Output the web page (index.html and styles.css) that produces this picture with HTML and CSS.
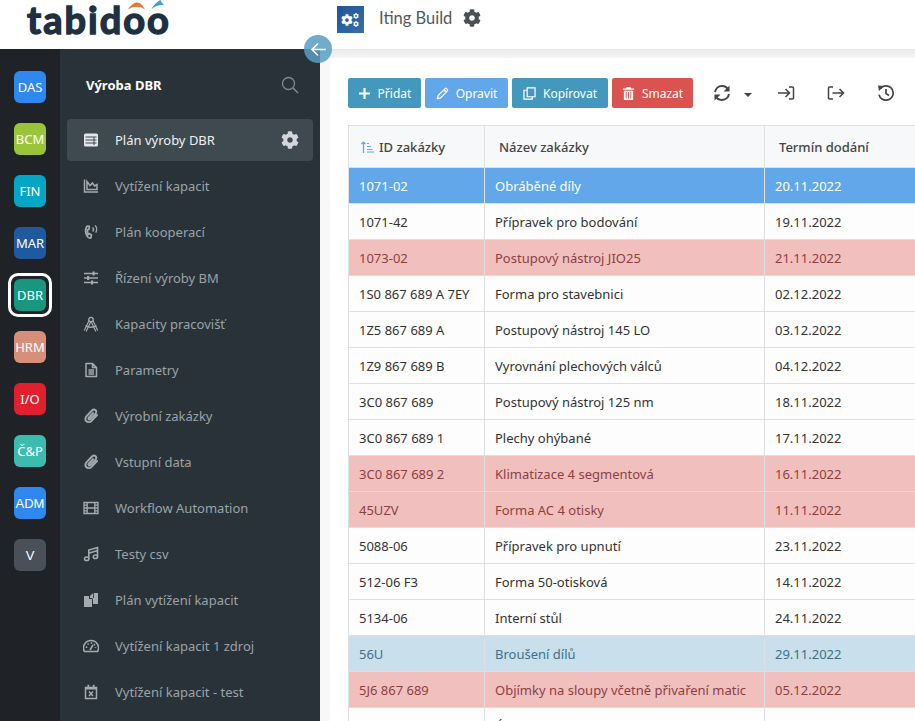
FILE: index.html
```html
<!DOCTYPE html>
<html lang="cs">
<head>
  <meta charset="UTF-8" />
  <meta name="viewport" content="width=device-width, initial-scale=1.0"/>
  <title>tabidoo - Výroba DBR</title>
  <link rel="stylesheet" href="styles.css">
</head>
<body>
  <svg class="defs" aria-hidden="true">
    <symbol id="cog" viewBox="0 0 512 512">
      <path fill="currentColor" d="M487.4 315.7l-42.6-24.6c4.3-23.2 4.3-47 0-70.2l42.6-24.6c4.9-2.8 7.1-8.6 5.5-14-11.1-35.6-30-67.8-54.7-94.6-3.8-4.1-10-5.1-14.8-2.3L380.8 110c-17.9-15.4-38.5-27.3-60.8-35.1V25.8c0-5.6-3.9-10.5-9.4-11.7-36.7-8.2-74.3-7.8-109.2 0-5.5 1.2-9.4 6.1-9.4 11.7V75c-22.2 7.9-42.8 19.8-60.8 35.1L88.7 85.5c-4.9-2.8-11-1.9-14.8 2.3-24.7 26.7-43.6 58.9-54.7 94.6-1.7 5.4.6 11.2 5.5 14L67.3 221c-4.3 23.2-4.3 47 0 70.2l-42.6 24.6c-4.9 2.8-7.1 8.6-5.5 14 11.1 35.6 30 67.8 54.7 94.6 3.8 4.1 10 5.1 14.8 2.3l42.6-24.6c17.9 15.4 38.5 27.3 60.8 35.1v49.2c0 5.6 3.9 10.5 9.4 11.7 36.7 8.2 74.3 7.8 109.2 0 5.5-1.2 9.4-6.1 9.4-11.7v-49.2c22.2-7.9 42.8-19.8 60.8-35.1l42.6 24.6c4.9 2.8 11 1.9 14.8-2.3 24.7-26.7 43.6-58.9 54.7-94.6 1.5-5.5-.7-11.3-5.6-14.1zM256 336c-44.1 0-80-35.9-80-80s35.9-80 80-80 80 35.9 80 80-35.9 80-80 80z"/>
    </symbol>
    <symbol id="clip" viewBox="0 0 16 16">
      <path fill="none" stroke="currentColor" stroke-width="1.900" stroke-linecap="round" d="M14 7l-5.400 5.800c-1.500 1.600-3.800 1.800-5.200.5-1.400-1.300-1.300-3.500.2-5.100l5.400-5.700c1.100-1.100 2.600-1.200 3.600-.3 1 .9.900 2.500-.2 3.600l-5 5.200c-.5.500-1.200.6-1.700.2-.4-.4-.3-1.200.2-1.700l4.200-4.400"/>
    </symbol>
  </svg>

  <header class="topbar">
    <div class="logo">
      <span class="logo-text">tabidoo</span>
      <svg class="logo-orange" viewBox="0 0 24 10"><path fill="#e8762c" d="M0 10C4 3 9 0 13 0c4 0 8 4 11 10-4-3-7-4-11-4-5 0-9 1-13 4z"/></svg>
      <svg class="logo-blue" viewBox="0 0 20 14"><path fill="#3f9fd0" d="M0 14C3 8 9 2 14 0c1 3 3 6 6 8-7-1-14 1-20 6z"/></svg>
    </div>
    <div class="app-tile">
      <svg width="19" height="16" viewBox="0 0 19 16">
        <use href="#cog" x="0" y="2" width="12" height="12" color="#fff"/>
        <use href="#cog" x="12" y="1" width="6" height="6" color="#fff"/>
        <use href="#cog" x="12" y="9" width="6" height="6" color="#fff"/>
      </svg>
    </div>
    <span class="app-name">Iting Build</span>
    <svg class="app-cog"><use href="#cog"/></svg>
  </header>

  <div class="layout">
    <button class="collapse" aria-label="Sbalit">
      <svg width="17" height="15" viewBox="0 0 18 16"><path fill="none" stroke="#fff" stroke-width="1.600" d="M17 8H2M8.500 1.500L2 8l6.500 6.500"/></svg>
    </button>

    <nav class="rail">
      <a class="tile das">DAS</a>
      <a class="tile bcm">BCM</a>
      <a class="tile fin">FIN</a>
      <a class="tile mar">MAR</a>
      <a class="tile dbr current">DBR</a>
      <a class="tile hrm">HRM</a>
      <a class="tile io">I/O</a>
      <a class="tile cp">Č&amp;P</a>
      <a class="tile adm arial">ADM</a>
      <a class="tile v arial">V</a>
    </nav>

    <aside class="sidebar">
      <div class="side-head">
        <strong>Výroba DBR</strong>
        <svg width="18" height="18" viewBox="0 0 18 18"><circle cx="7.500" cy="7.500" r="6" fill="none" stroke="#7f888d" stroke-width="1.300"/><path stroke="#7f888d" stroke-width="1.600" d="M12 12l5 5"/></svg>
      </div>
      <ul class="menu">
        <li class="active">
          <svg class="mi" viewBox="0 0 16 16"><rect x="1" y="1.500" width="14" height="13" rx="1.500" fill="currentColor"/><path fill="none" stroke="#3e4a50" stroke-width="1" d="M2.500 5h11M2.500 8h11M2.500 11h11M11 5v8"/></svg>
          <span>Plán výroby DBR</span>
          <svg class="item-cog"><use href="#cog"/></svg>
        </li>
        <li>
          <svg class="mi" viewBox="0 0 16 16"><path fill="none" stroke="currentColor" stroke-width="1.500" d="M1.500 1.500v12.500H15M4 11.500V3.500l3 4 2.500-2.500 2 3 2.500-1.500v5z"/></svg>
          <span>Vytížení kapacit</span>
        </li>
        <li>
          <svg class="mi" viewBox="0 0 16 16"><path fill="none" stroke="currentColor" stroke-width="1.700" stroke-linejoin="round" d="M4.500 2c-2 1.500-2.700 5.200-1.200 8.500 1 2.400 2.700 3.800 4.500 3.500l.7-3-2.300-1.400-1 .9c-.8-1.500-1-3.200-.6-4.800l1.300-.3.400-3z"/><path fill="none" stroke="currentColor" stroke-width="1.400" d="M9.500 3.500c1 .8 1.200 2.500.3 4M12 1.500c1.800 1.500 2.200 4.600.7 7.200"/></svg>
          <span>Plán kooperací</span>
        </li>
        <li>
          <svg class="mi" viewBox="0 0 16 16"><path fill="none" stroke="currentColor" stroke-width="1.400" d="M1 3.500h14M1 8h14M1 12.500h14"/><path fill="currentColor" d="M9.500 1.500h2.200v4H9.500zM4 6h2.200v4H4zM8 10.500h2.200v4H8z"/></svg>
          <span>Řízení výroby BM</span>
        </li>
        <li>
          <svg class="mi" viewBox="0 0 16 16"><path fill="none" stroke="currentColor" stroke-width="3.200" d="M8 3L2.200 15M8 3l5.800 12"/><path fill="none" stroke="#293238" stroke-width="1" d="M8 3L2.200 15M8 3l5.800 12"/><path fill="none" stroke="currentColor" stroke-width="1.500" d="M2.500 9.500c3 2.300 8 2.300 11 0"/><circle cx="8" cy="3.500" r="2.200" fill="#293238" stroke="currentColor" stroke-width="1.300"/></svg>
          <span>Kapacity pracovišť</span>
        </li>
        <li>
          <svg class="mi" viewBox="0 0 16 16"><path fill="none" stroke="currentColor" stroke-width="1.500" stroke-linejoin="round" d="M3 1.500h6.500L13.500 5.500v9H3zM9.500 1.500v4h4M5.500 8h5.500M5.500 10h5.500M5.500 12h5.500"/></svg>
          <span>Parametry</span>
        </li>
        <li><svg class="mi"><use href="#clip"/></svg><span>Výrobní zakázky</span></li>
        <li><svg class="mi"><use href="#clip"/></svg><span>Vstupní data</span></li>
        <li>
          <svg class="mi" viewBox="0 0 16 16"><path fill="none" stroke="currentColor" stroke-width="1.300" d="M1 2.500h14v11H1zM4.200 2.500v11M11.800 2.500v11M1 5.200h3.200M1 8h3.200M1 10.800h3.200M11.800 5.200H15M11.800 8H15M11.800 10.800H15M4.200 8h7.600"/></svg>
          <span>Workflow Automation</span>
        </li>
        <li>
          <svg class="mi" viewBox="0 0 16 16"><path fill="none" stroke="currentColor" stroke-width="1.600" d="M5.800 12.500V4L14.500 1.500v9M5.800 7.200l8.700-2.700"/><ellipse cx="3.700" cy="12.800" rx="2.200" ry="1.800" fill="none" stroke="currentColor" stroke-width="1.500"/><ellipse cx="12.400" cy="10.800" rx="2.200" ry="1.800" fill="none" stroke="currentColor" stroke-width="1.500"/></svg>
          <span>Testy csv</span>
        </li>
        <li>
          <svg class="mi" viewBox="0 0 16 16"><path fill="currentColor" d="M1 4h5v3h3v8H1zM9.500 1.500L7 4v2h3V1.500zM10.800 1H15v11h-5V8l-.5-2h1.300z"/></svg>
          <span>Plán vytížení kapacit</span>
        </li>
        <li>
          <svg class="mi" viewBox="0 0 16 16"><path fill="none" stroke="currentColor" stroke-width="1.600" stroke-linejoin="round" d="M1.400 13.500a7.500 7.500 0 1 1 13.200 0z"/><path stroke="currentColor" stroke-width="1.600" d="M7 12l3-5"/><path fill="none" stroke="currentColor" stroke-width="1.500" stroke-dasharray="1.500 2" d="M3.500 10c0-3 2-5 4.500-5s4.500 2 4.500 5"/></svg>
          <span>Vytížení kapacit 1 zdroj</span>
        </li>
        <li>
          <svg class="mi" viewBox="0 0 16 16"><path fill="none" stroke="currentColor" stroke-width="1.500" d="M2.500 3.500h11v11h-11zM6 7.500L10 12M10 7.500L6 12"/><path fill="currentColor" d="M2.500 3h11v2.500h-11zM4.500 .8h1.700V3H4.500zM9.800 .8h1.700V3H9.800z"/></svg>
          <span>Vytížení kapacit - test</span>
        </li>
      </ul>
    </aside>

    <main class="content">
      <div class="panel">
        <div class="toolbar">
          <button class="btn teal"><svg viewBox="0 0 12 12"><path stroke="#fff" stroke-width="2" d="M6 1v10M1 6h10"/></svg>Přidat</button>
          <button class="btn blue"><svg viewBox="0 0 14 14"><path fill="none" stroke="#fff" stroke-width="1.300" d="M1.500 12.500l.8-3.300L9.800 1.700a1 1 0 0 1 1.400 0l1.100 1.100a1 1 0 0 1 0 1.400l-7.500 7.500zM8.500 3l2.500 2.500"/></svg>Opravit</button>
          <button class="btn teal"><svg viewBox="0 0 14 14"><path fill="none" stroke="#fff" stroke-width="1.300" d="M4.500 1h8.500v9.500H4.500zM4.500 3.500h-3.500v9.500h9v-2.500"/></svg>Kopírovat</button>
          <button class="btn red"><svg viewBox="0 0 14 14"><path fill="#fff" d="M5 0h4l1 1.500h3v1.500H1V1.500h3zM2 4h10v10H2zm2 1.500v7h1v-7zm2.500 0v7h1v-7zm2.500 0v7h1v-7z"/></svg>Smazat</button>

          <svg class="tool sync" viewBox="0 0 18 18"><path fill="none" stroke="#444" stroke-width="2" d="M15.500 6.500C14.500 3.500 12 2 9 2 5 2 2.500 5 2 8M2.500 11.500C3.500 14.500 6 16 9 16c4 0 6.500-3 7-6"/><path fill="#444" d="M16.500 1.500v6h-6zM1.500 16.500v-6h6z"/></svg>
          <span class="caret"></span>
          <svg class="tool login" viewBox="0 0 18 18"><path fill="none" stroke="#444" stroke-width="1.500" d="M1 9h11M8.500 5l4 4-4 4M12 3h3.500a1 1 0 0 1 1 1v10a1 1 0 0 1-1 1H12"/></svg>
          <svg class="tool logout" viewBox="0 0 18 18"><path fill="none" stroke="#444" stroke-width="1.500" d="M6 3H2.500a1 1 0 0 0-1 1v10a1 1 0 0 0 1 1H6M5.500 9h11M12.500 5l4 4-4 4"/></svg>
          <svg class="tool history" viewBox="0 0 18 18"><path fill="none" stroke="#444" stroke-width="1.700" d="M3.500 4.500C5 2.500 7 1.800 9 1.800a7.200 7.200 0 1 1-7 8.800M9 5v4.500l3 2"/><path fill="#444" d="M1 1.500l6 .5-5 5z"/></svg>
        </div>

        <div class="table-wrap">
          <table class="grid">
            <colgroup><col class="c1"><col class="c2"><col class="c3"></colgroup>
            <thead>
              <tr>
                <th class="id-head"><svg class="sort" viewBox="0 0 13 12"><path fill="none" stroke="#62a7e9" stroke-width="1.200" d="M2.500 12V1M.5 3l2-2 2 2M6 2.500h2M6 5.500h4M6 8.500h5.500M6 11h7"/></svg>ID zakázky</th>
                <th>Název zakázky</th>
                <th>Termín dodání</th>
              </tr>
            </thead>
            <tbody>
              <tr class="selected"><td>1071-02</td><td>Obráběné díly</td><td>20.11.2022</td></tr>
              <tr><td>1071-42</td><td>Přípravek pro bodování</td><td>19.11.2022</td></tr>
              <tr class="late"><td>1073-02</td><td>Postupový nástroj JIO25</td><td>21.11.2022</td></tr>
              <tr><td>1S0 867 689 A 7EY</td><td>Forma pro stavebnici</td><td>02.12.2022</td></tr>
              <tr><td>1Z5 867 689 A</td><td>Postupový nástroj 145 LO</td><td>03.12.2022</td></tr>
              <tr><td>1Z9 867 689 B</td><td>Vyrovnání plechových válců</td><td>04.12.2022</td></tr>
              <tr><td>3C0 867 689</td><td>Postupový nástroj 125 nm</td><td>18.11.2022</td></tr>
              <tr><td>3C0 867 689 1</td><td>Plechy ohýbané</td><td>17.11.2022</td></tr>
              <tr class="late"><td>3C0 867 689 2</td><td>Klimatizace 4 segmentová</td><td>16.11.2022</td></tr>
              <tr class="late"><td>45UZV</td><td>Forma AC 4 otisky</td><td>11.11.2022</td></tr>
              <tr><td>5088-06</td><td>Přípravek pro upnutí</td><td>23.11.2022</td></tr>
              <tr><td>512-06 F3</td><td>Forma 50-otisková</td><td>14.11.2022</td></tr>
              <tr><td>5134-06</td><td>Interní stůl</td><td>24.11.2022</td></tr>
              <tr class="info"><td>56U</td><td>Broušení dílů</td><td>29.11.2022</td></tr>
              <tr class="late"><td>5J6 867 689</td><td>Objímky na sloupy včetně přivaření matic</td><td>05.12.2022</td></tr>
              <tr><td></td><td>Úhelník</td><td></td></tr>
            </tbody>
          </table>
        </div>
      </div>
    </main>
  </div>
</body>
</html>
```

FILE: styles.css
```css
* {
  box-sizing: border-box;
}

html, body {
  height: 100%;
}

body {
  margin: 0;
  height: 721px;
  overflow: hidden;
  display: flex;
  flex-direction: column;
  font-family: 'Noto Sans', sans-serif;
  font-size: 13px;
  color: #333;
  background: #fff;
}

.defs {
  display: none;
}

/* top bar */
.topbar {
  height: 49px;
  flex-shrink: 0;
  display: flex;
  align-items: flex-start;
  background: #fff;
}

.logo {
  position: relative;
  width: 337px;
  height: 49px;
  padding: 0 0 0 27px;
  flex-shrink: 0;
}

.logo-text {
  display: block;
  font-family: 'Lato', sans-serif;
  font-weight: 700;
  font-size: 38px;
  line-height: 38px;
  letter-spacing: 2px;
  color: #1f3040;
  -webkit-text-stroke: 1.4px #1f3040;
}

.logo-orange {
  position: absolute;
  left: 128px;
  top: 2px;
  width: 17px;
  height: 8px;
}

.logo-blue {
  position: absolute;
  left: 148px;
  top: 0;
  width: 20px;
  height: 9px;
}

.app-tile {
  width: 27px;
  height: 27px;
  margin-top: 6px;
  display: flex;
  align-items: center;
  justify-content: center;
  background: linear-gradient(135deg, #1f5599, #3a6ea8);
}

.app-name {
  margin: 7px 0 0 15px;
  font-family: 'Lato', sans-serif;
  font-size: 16.5px;
  line-height: 22px;
  color: #54595e;
}

.app-cog {
  width: 18px;
  height: 18px;
  margin: 9px 0 0 11px;
  color: #4a4f54;
}

/* page columns */
.layout {
  position: relative;
  flex: 1;
  min-height: 0;
  display: flex;
}

.collapse {
  position: absolute;
  left: 304px;
  top: -14px;
  z-index: 3;
  width: 28px;
  height: 28px;
  padding: 0;
  border: none;
  border-radius: 50%;
  display: flex;
  align-items: center;
  justify-content: center;
  background: rgba(88, 158, 194, 0.85);
}

.rail {
  width: 60px;
  flex-shrink: 0;
  padding-top: 22px;
  display: flex;
  flex-direction: column;
  align-items: center;
  gap: 20px;
  background: #1f2226;
}

.tile {
  position: relative;
  width: 32px;
  height: 32px;
  border-radius: 6px;
  display: flex;
  align-items: center;
  justify-content: center;
  color: #fff;
  font-size: 13px;
}

.tile.arial {
  font-family: 'Liberation Sans', sans-serif;
}

.tile.current::after {
  content: "";
  position: absolute;
  inset: -6px;
  border: 3px solid #fff;
  border-radius: 10px;
}

.das { background: #2e88f0; }
.bcm { background: #9ac43a; }
.fin { background: #03a6c4; }
.mar { background: #1f5aa0; }
.dbr { background: #17977f; }
.hrm { background: #d88f7a; }
.io { background: #e0202e; }
.cp { background: #3cbcaf; }
.adm { background: #2e88f0; }
.v { background: #4a5058; }

/* sidebar */
.sidebar {
  width: 260px;
  flex-shrink: 0;
  background: #293238;
}

.side-head {
  height: 70px;
  padding: 2px 21px 0 26px;
  display: flex;
  align-items: center;
  justify-content: space-between;
  color: #fff;
}

.menu {
  list-style: none;
  margin: 0;
  padding: 0 7px;
}

.menu li {
  height: 42px;
  margin-bottom: 4px;
  padding: 0 14px 0 16px;
  display: flex;
  align-items: center;
  border-radius: 4px;
  color: #9aa3a8;
}

.menu li.active {
  background: #3e4a50;
  color: #eef0f1;
}

.mi {
  width: 16px;
  height: 16px;
  margin-right: 16px;
  flex-shrink: 0;
  color: #a3abb0;
}

.active .mi {
  color: #e4e7e8;
}

.item-cog {
  width: 18px;
  height: 18px;
  margin-left: auto;
  color: #d3d7d9;
}

/* main area */
.content {
  flex: 1;
  min-width: 0;
  padding: 9px 0 0 10px;
  background: linear-gradient(to bottom, #e9e9e9, #f6f6f6 9px, #f8f8f8 9px);
  overflow: hidden;
}

.panel {
  height: 100%;
  padding: 20px 0 0 18px;
  background: #fff;
  overflow: hidden;
}

.toolbar {
  height: 30px;
  margin-bottom: 17px;
  display: flex;
  align-items: center;
  gap: 4px;
}

.btn {
  height: 30px;
  padding: 0;
  border: none;
  border-radius: 2px;
  display: flex;
  align-items: center;
  justify-content: center;
  gap: 7px;
  color: #fff;
  font-family: 'Noto Sans', sans-serif;
  font-size: 12px;
}

.btn svg {
  width: 13px;
  height: 13px;
}

.btn.teal { background: #4598bd; }
.btn.blue { background: #62a7e9; }
.btn.red { background: #da5350; }

.toolbar .btn:nth-child(1) { width: 73px; }
.toolbar .btn:nth-child(2) { width: 83px; }
.toolbar .btn:nth-child(3) { width: 96px; }
.toolbar .btn:nth-child(4) { width: 81px; }

.tool {
  width: 18px;
  height: 18px;
  flex-shrink: 0;
}

.sync { margin-left: 16px; }
.login { margin-left: 21px; }
.logout { margin-left: 28px; }
.history { margin-left: 28px; }

.caret {
  margin-left: 9px;
  margin-top: 3px;
  border: 4px solid transparent;
  border-top: 4px solid #444;
  border-bottom: none;
}

/* table */
.table-wrap {
  width: 900px;
}

.grid {
  width: 800px;
  table-layout: fixed;
  border-collapse: collapse;
}

.c1 { width: 136px; }
.c2 { width: 280px; }
.c3 { width: 384px; }

.grid th {
  height: 42px;
  padding: 0 14px;
  border: 1px solid #dde0e3;
  background: #f7f8fa;
  text-align: left;
  font-weight: 500;
  color: #444;
}

.grid th.id-head {
  padding-left: 12px;
}

.sort {
  width: 13px;
  height: 12px;
  margin-right: 5px;
  vertical-align: -1px;
}

.grid td {
  height: 36px;
  padding: 0 10px;
  border: 1px solid #dde0e3;
  background: #fdfdfd;
  white-space: nowrap;
}

.selected td {
  background: #62a7e9;
  color: #fff;
}

.late td {
  background: #f2bfbf;
  color: #8c3f3f;
}

.info td {
  background: #c9e0ec;
  color: #3f6f88;
}
```
